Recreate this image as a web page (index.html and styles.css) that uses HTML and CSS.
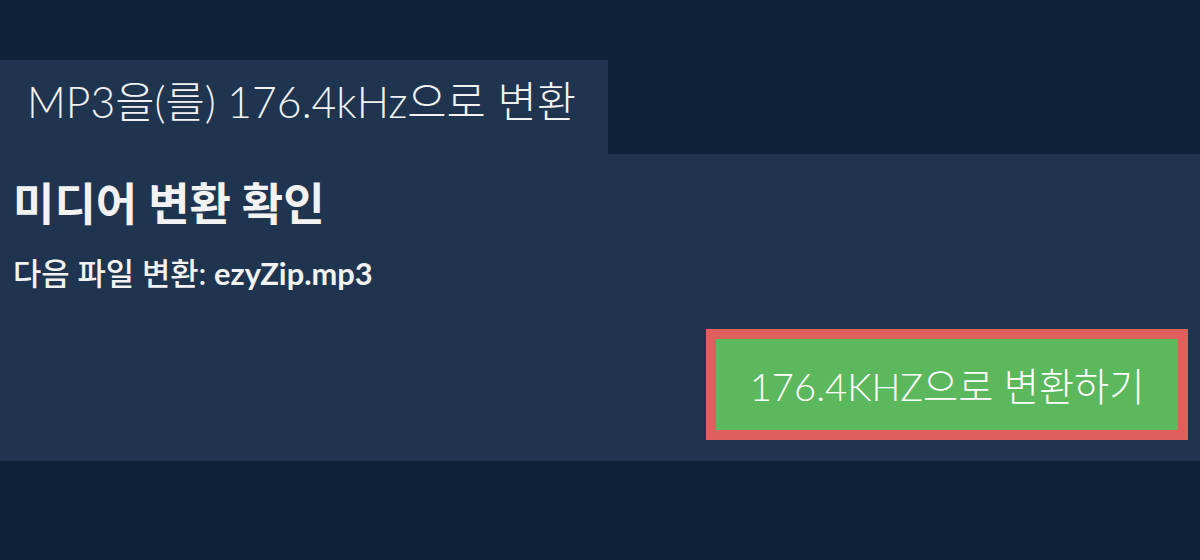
FILE: index.html
```html
<!DOCTYPE html>
<html lang="ko">
<head>
<meta charset="utf-8">
<link rel="stylesheet" href="styles.css">
</head>
<body>
<div class="page">
  <div class="tab">MP3을(를) 176.4kHz으로 변환</div>
  <div class="panel">
    <h1 class="title">미디어 변환 확인</h1>
    <p class="subtitle">다음 파일 변환: <b class="file">ezyZip.mp3</b></p>
    <div class="actions">
      <button class="convert">176.4KHZ으로 변환하기</button>
    </div>
  </div>
</div>
</body>
</html>
```
FILE: styles.css
```css
html, body {
  margin: 0;
  padding: 0;
  background: #0e2239;
  width: 1200px;
  height: 560px;
  overflow: hidden;
  font-family: Lato, "Noto Sans CJK KR", sans-serif;
  color: #f2f2f2;
}
.page {
  padding-top: 60px;
}
.tab {
  display: inline-block;
  box-sizing: border-box;
  width: 608px;
  height: 94px;
  background: #1f354f;
  padding: 0 0 0 27px;
  font-size: 42.7px;
  font-weight: 300;
  line-height: 84px;
  color: #f2f2f2;
  white-space: nowrap;
}
.panel {
  background: #1f354f;
  height: 307px;
  box-sizing: border-box;
  padding: 18px 12px 0 13px;
  display: flex;
  flex-direction: column;
}
.title {
  margin: 0;
  font-size: 45px;
  font-weight: 700;
  line-height: 64px;
}
.subtitle {
  margin: 18px 0 0;
  font-size: 30.8px;
  font-weight: 500;
  line-height: 40px;
}
.file {
  font-weight: 700;
}
.actions {
  display: flex;
  justify-content: flex-end;
  margin-top: 35px;
}
.convert {
  box-sizing: border-box;
  width: 482px;
  height: 111px;
  border: 10px solid #dd605c;
  background: #5cb85c;
  color: #fff;
  font-family: Lato, "Noto Sans CJK KR", sans-serif;
  font-size: 38.2px;
  font-weight: 300;
  padding: 0;
  white-space: nowrap;
}
```
